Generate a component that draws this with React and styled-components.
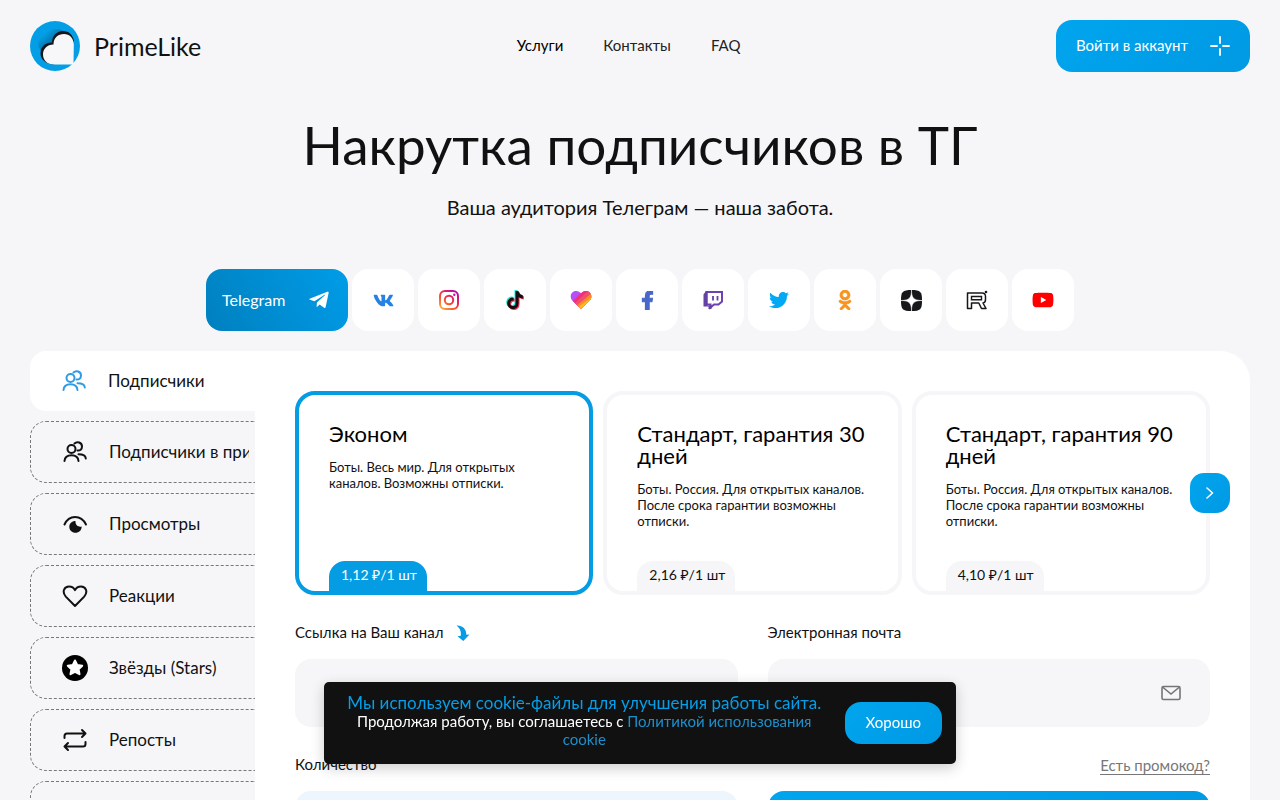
import styled, { createGlobalStyle, css } from "styled-components";
import {
  FaFacebookF,
  FaInstagram,
  FaOdnoklassniki,
  FaTelegramPlane,
  FaTiktok,
  FaTwitter,
  FaVk,
  FaYoutube,
} from "react-icons/fa";

const networks = [
  { name: "VK", icon: <FaVk size={21} color="#2681e4" /> },
  { name: "Instagram", icon: <InstagramIcon /> },
  { name: "TikTok", icon: <TiktokIcon /> },
  { name: "Likee", icon: <LikeeIcon /> },
  {
    name: "Facebook",
    icon: <FaFacebookF size={19} color="#4867c8" stroke="#4867c8" strokeWidth={30} />,
  },
  { name: "Twitch", icon: <TwitchIcon /> },
  { name: "Twitter", icon: <FaTwitter size={20} color="#03a9f4" /> },
  {
    name: "Одноклассники",
    icon: <FaOdnoklassniki size={20} color="#f7931e" stroke="#f7931e" strokeWidth={16} />,
  },
  { name: "Дзен", icon: <DzenIcon /> },
  { name: "Rutube", icon: <RutubeIcon /> },
  { name: "YouTube", icon: <FaYoutube size={22} color="#fe0000" /> },
];

const services = [
  { name: "Подписчики", icon: <UsersIcon />, active: true },
  { name: "Подписчики в приватный канал", icon: <UsersIcon /> },
  { name: "Просмотры", icon: <EyeIcon /> },
  { name: "Реакции", icon: <HeartIcon /> },
  { name: "Звёзды (Stars)", icon: <StarIcon /> },
  { name: "Репосты", icon: <RepeatIcon /> },
];

const tariffs = [
  {
    title: "Эконом",
    text: "Боты. Весь мир. Для открытых каналов. Возможны отписки.",
    price: "1,12 ₽/1 шт",
    active: true,
  },
  {
    title: "Стандарт, гарантия 30 дней",
    text: "Боты. Россия. Для открытых каналов. После срока гарантии возможны отписки.",
    price: "2,16 ₽/1 шт",
  },
  {
    title: "Стандарт, гарантия 90 дней",
    text: "Боты. Россия. Для открытых каналов. После срока гарантии возможны отписки.",
    price: "4,10 ₽/1 шт",
  },
];

export default function App() {
  return (
    <>
      <GlobalStyle />
      <Page>
        <Header>
          <Logo href="#">
            <LogoIcon />
            <span>PrimeLike</span>
          </Logo>
          <Nav>
            <NavLink href="#" $active>
              Услуги
            </NavLink>
            <NavLink href="#">Контакты</NavLink>
            <NavLink href="#">FAQ</NavLink>
          </Nav>
          <LoginButton>
            <span>Войти в аккаунт</span>
            <PlusIcon />
          </LoginButton>
        </Header>

        <Title>Накрутка подписчиков в ТГ</Title>
        <Subtitle>Ваша аудитория Телеграм — наша забота.</Subtitle>

        <Networks>
          <NetworkButton $active>
            <span>Telegram</span>
            <FaTelegramPlane size={22} />
          </NetworkButton>
          {networks.map((item) => (
            <NetworkButton key={item.name} aria-label={item.name}>
              {item.icon}
            </NetworkButton>
          ))}
        </Networks>

        <Main>
          <Sidebar>
            {services.map((item) => (
              <ServiceButton key={item.name} $active={item.active}>
                {item.icon}
                <span>{item.name}</span>
              </ServiceButton>
            ))}
            <ServiceButton aria-label="Ещё" />
          </Sidebar>

          <Panel>
            <Slider>
              {tariffs.map((item) => (
                <TariffCard key={item.title} $active={item.active}>
                  <h2>{item.title}</h2>
                  <p>{item.text}</p>
                  <Price $active={item.active}>{item.price}</Price>
                </TariffCard>
              ))}
              <NextButton aria-label="Вперёд">
                <svg width="8" height="12" viewBox="0 0 8 12" fill="none">
                  <path
                    d="M1 1l5.5 5L1 11"
                    stroke="#fff"
                    strokeWidth="1.6"
                    strokeLinecap="round"
                    strokeLinejoin="round"
                  />
                </svg>
              </NextButton>
            </Slider>

            <Form onSubmit={(e) => e.preventDefault()}>
              <Field>
                <LabelRow>
                  <label htmlFor="link">Ссылка на Ваш канал</label>
                  <ArrowIcon />
                </LabelRow>
                <InputBox>
                  <input id="link" type="text" />
                </InputBox>
              </Field>
              <Field>
                <LabelRow>
                  <label htmlFor="email">Электронная почта</label>
                </LabelRow>
                <InputBox>
                  <input id="email" type="email" />
                  <MailIcon />
                </InputBox>
              </Field>
              <Field>
                <LabelRow>
                  <label htmlFor="count">Количество</label>
                </LabelRow>
                <InputBox $tinted>
                  <input id="count" type="number" />
                </InputBox>
              </Field>
              <Field>
                <LabelRow $end>
                  <PromoLink href="#">Есть промокод?</PromoLink>
                </LabelRow>
                <SubmitButton type="submit" aria-label="Оформить заказ" />
              </Field>
            </Form>
          </Panel>
        </Main>
      </Page>

      <CookieBar>
        <CookieText>
          <strong>Мы используем cookie-файлы для улучшения работы сайта.</strong>
          <p>
            Продолжая работу, вы соглашаетесь с{" "}
            <a href="#">Политикой использования cookie</a>
          </p>
        </CookieText>
        <CookieButton>Хорошо</CookieButton>
      </CookieBar>
    </>
  );
}

function LogoIcon() {
  return (
    <svg width="50" height="50" viewBox="0 0 50 50">
      <defs>
        <linearGradient id="logoShade" x1="0.1" y1="0.1" x2="0.8" y2="0.8">
          <stop offset="0.2" stopColor="#049ee6" />
          <stop offset="1" stopColor="#04587f" />
        </linearGradient>
      </defs>
      <circle cx="25" cy="25" r="25" fill="#049ee6" />
      <path
        d="M11 15C18 8 27 6 33 10L23 24L11 30C7 25 7 19 11 15z"
        fill="url(#logoShade)"
      />
      <path
        d="M24 43.5C16 43 10.500 38.500 10.500 32.500C10.500 26 15 21.500 22 21.500C22 15 26.500 10 33 10C39 10 43 14 44 20L40 34z"
        fill="#14161a"
      />
      <path
        d="M43.500 43.500H24C17.500 43.500 13 39.500 13 33.500C13 28 17 23.500 23.500 23.500C23.500 17 28 13 34 13C39.500 13 43.500 17 43.800 23z"
        fill="#f7f7fa"
      />
    </svg>
  );
}

function PlusIcon() {
  return (
    <svg width="20" height="20" viewBox="0 0 20 20">
      <path
        d="M10 1v6M10 13v6M1 10h6M13 10h6"
        stroke="#fff"
        strokeWidth="1.8"
        strokeLinecap="round"
      />
    </svg>
  );
}

function InstagramIcon() {
  return (
    <svg width="22" height="22" viewBox="0 0 22 22" fill="none">
      <defs>
        <linearGradient
          id="insta"
          gradientUnits="userSpaceOnUse"
          x1="3"
          y1="21"
          x2="19"
          y2="1"
        >
          <stop offset="0" stopColor="#fdb52f" />
          <stop offset="0.5" stopColor="#f5333c" />
          <stop offset="1" stopColor="#b400b4" />
        </linearGradient>
      </defs>
      <rect x="2" y="2" width="18" height="18" rx="5" stroke="url(#insta)" strokeWidth="2" />
      <circle cx="11" cy="11" r="4.200" stroke="url(#insta)" strokeWidth="2" />
      <circle cx="16.300" cy="5.700" r="1.200" fill="#c8109a" />
    </svg>
  );
}

function TiktokIcon() {
  return (
    <svg width="20" height="20" viewBox="0 0 20 20">
      <FaTiktok size={18} x="0" y="0" color="#25e5df" />
      <FaTiktok size={18} x="2" y="2" color="#fe2c55" />
      <FaTiktok size={18} x="1" y="1" color="#111" />
    </svg>
  );
}

function LikeeIcon() {
  return (
    <svg width="22" height="20" viewBox="0 0 22 20">
      <clipPath id="likee">
        <path d="M11 19L2.500 10.800C-1 7 1 1 6 1C8.500 1 10 2.200 11 3.500C12 2.200 13.500 1 16 1C21 1 23 7 19.500 10.800z" />
      </clipPath>
      <g clipPath="url(#likee)">
        <rect width="22" height="20" fill="#b64df5" />
        <path d="M1 13L14 0H22V20H0z" fill="#f0307d" />
        <path d="M3 15L19 0H22V20H2z" fill="#f2506a" />
        <path d="M5 17L22 3V20H4z" fill="#fb8a2c" />
        <path d="M7 18L22 7V20H6z" fill="#fdbc1f" />
      </g>
    </svg>
  );
}

function TwitchIcon() {
  return (
    <svg width="21" height="20" viewBox="0 0 21 20" fill="none">
      <path
        d="M3.500 2H19V11.500L15.500 14.500H11L7.500 17.500V14.500H3.500z"
        stroke="#6f42b3"
        strokeWidth="2"
      />
      <path d="M0.500 4.500L3 1H4.500V15.500H8.500V19H5.500V16.500H0.500z" fill="#6441a5" />
      <path d="M10 6v4.500M14.500 6v4.500" stroke="#6441a5" strokeWidth="1.8" />
    </svg>
  );
}

function DzenIcon() {
  return (
    <svg width="21" height="21" viewBox="0 0 21 21">
      <path
        d="M10.500 0C1.500 0 0 1.500 0 10.500S1.500 21 10.500 21S21 19.500 21 10.500S19.500 0 10.500 0z"
        fill="#16171a"
      />
      <path
        d="M10.500 0C10.600 8 12.500 10.300 21 10.500C12.500 10.700 10.600 13 10.500 21C10.400 13 8.500 10.700 0 10.500C8.500 10.300 10.400 8 10.500 0z"
        fill="#fff"
        stroke="#fff"
        strokeWidth="0.500"
      />
    </svg>
  );
}

function RutubeIcon() {
  return (
    <svg width="22" height="20" viewBox="0 0 22 20" fill="none">
      <path
        d="M1.500 18.500V3H16C18.500 3 19.500 4.200 19.500 6.500V9.500C19.500 11.600 18.800 12.800 17 13L20 18.500H15.500L12.800 13H5.500V18.500z"
        stroke="#16171a"
        strokeWidth="1.5"
        strokeLinejoin="round"
      />
      <path d="M5.500 6.500H15.500V9.700H5.500z" stroke="#16171a" strokeWidth="1.4" />
      <circle cx="20" cy="2" r="1.300" fill="#16171a" />
    </svg>
  );
}

function UsersIcon() {
  return (
    <ServiceIcon viewBox="0 0 26 26">
      <circle cx="9.500" cy="10" r="4" />
      <path d="M2.500 22C2.800 18 5.200 16.300 9.500 16.300S16.200 18 16.500 22" />
      <path d="M12.500 4.500C15 2 20 3.500 20 7.500C20 10.500 18 11.800 15.500 11.600" />
      <path d="M16.500 15.300C21 15.300 23.500 16.500 23.800 19.500" />
    </ServiceIcon>
  );
}

function EyeIcon() {
  return (
    <ServiceIcon viewBox="0 0 26 26">
      <path d="M2.500 13.500C7 3.500 19 3.500 24 13.500" />
      <path
        d="M13.500 10C9.800 10 7.300 12.500 7.300 15.800C7.300 19.300 10 21.800 13.500 21.800S19.700 19.300 19.700 15.500C16.800 16.300 13.200 14.500 13.500 10z"
        fill="currentColor"
        stroke="none"
      />
    </ServiceIcon>
  );
}

function HeartIcon() {
  return (
    <ServiceIcon viewBox="0 0 26 26">
      <path d="M13 23L3.800 13.600C-0.500 8.500 2.500 3.500 7 3.500C10 3.500 12 5 13 7.200C14 5 16 3.500 19 3.500C23.500 3.500 26.500 8.500 22.200 13.600z" />
    </ServiceIcon>
  );
}

function StarIcon() {
  return (
    <ServiceIcon viewBox="0 0 26 26">
      <circle cx="13" cy="13" r="13" fill="#000" stroke="none" />
      <path
        d="M13 5.500L15.200 10L20.200 10.700L16.600 14.200L17.500 19.200L13 16.800L8.500 19.200L9.400 14.200L5.800 10.700L10.800 10z"
        fill="#fff"
        stroke="#fff"
      />
    </ServiceIcon>
  );
}

function RepeatIcon() {
  return (
    <ServiceIcon viewBox="0 0 26 26">
      <path d="M2.500 11V9C2.500 7.500 3.500 6.500 5 6.500H23.500M20 3L23.500 6.500L20 10" />
      <path d="M23.500 15V17C23.500 18.500 22.500 19.500 21 19.500H2.500M6 16L2.500 19.500L6 23" />
    </ServiceIcon>
  );
}

function ArrowIcon() {
  return (
    <svg width="14" height="16" viewBox="0 0 14 16">
      <path
        d="M0.500 0.500C6.500 0.200 10.500 4 10.300 9.800L13.500 9.500L7.300 16L1.500 11.300L4.800 10.800C5.500 7 4 3 0.500 0.500z"
        fill="#049de5"
      />
    </svg>
  );
}

function MailIcon() {
  return (
    <svg width="22" height="16" viewBox="0 0 22 16" fill="none">
      <rect
        x="2"
        y="1.500"
        width="18"
        height="13"
        rx="1.500"
        stroke="#757578"
        strokeWidth="1.6"
      />
      <path d="M2.500 2L11 9L19.500 2" stroke="#757578" strokeWidth="1.6" />
    </svg>
  );
}

const GlobalStyle = createGlobalStyle`
  * {
    box-sizing: border-box;
  }

  body {
    margin: 0;
    background: #f6f6f9;
    color: #111;
    font-family: "Lato", "Noto Sans", sans-serif;
    font-size: 15px;
  }

  button, input {
    font: inherit;
    color: inherit;
    border: 0;
  }

  button {
    cursor: pointer;
  }

  button span {
    padding-bottom: 2px;
  }

  a {
    color: inherit;
    text-decoration: none;
  }

  svg {
    flex-shrink: 0;
  }
`;

const Page = styled.div`
  padding: 20px 30px 0;
`;

const Header = styled.header`
  display: flex;
  justify-content: space-between;
  align-items: center;
`;

const Logo = styled.a`
  display: flex;
  align-items: center;
  gap: 14px;
  font-size: 25px;
`;

const Nav = styled.nav`
  display: flex;
  gap: 40px;
  padding-bottom: 2px;
`;

const NavLink = styled.a`
  color: ${(props) => (props.$active ? "#000" : "#222")};
`;

const blueGradient = css`
  background: linear-gradient(135deg, #00a5ee, #0099e4);
  color: #fff;
`;

const LoginButton = styled.button`
  ${blueGradient}
  display: flex;
  align-items: center;
  gap: 22px;
  height: 52px;
  padding: 0 20px;
  border-radius: 16px;
`;

const Title = styled.h1`
  margin: 43px 0 0;
  text-align: center;
  font-size: 53px;
  line-height: 60px;
  font-weight: 400;
`;

const Subtitle = styled.p`
  margin: 20px 0 0;
  text-align: center;
  font-size: 20px;
  line-height: 24px;
`;

const Networks = styled.div`
  display: flex;
  justify-content: center;
  gap: 4px;
  margin-top: 50px;
`;

const NetworkButton = styled.button`
  display: flex;
  align-items: center;
  justify-content: center;
  width: 62px;
  height: 62px;
  padding: 0;
  border-radius: 16px;
  background: #fff;

  ${(props) =>
    props.$active &&
    css`
      width: 142px;
      padding: 0 18px 0 16px;
      justify-content: space-between;
      font-size: 16px;
      background: linear-gradient(60deg, #0080bf, #009ce8);
      color: #fff;
    `}
`;

const Main = styled.main`
  display: flex;
  margin-top: 20px;
`;

const Sidebar = styled.aside`
  width: 225px;
  flex-shrink: 0;
  display: flex;
  flex-direction: column;
  gap: 10px;
`;

const ServiceButton = styled.button`
  display: flex;
  align-items: center;
  gap: 21px;
  height: 62px;
  padding: 0 6px 0 31px;
  white-space: nowrap;
  font-size: 17px;
  border: 1px dashed #77777c;
  border-right: 0;
  border-radius: 16px 0 0 16px;
  background: transparent;

  span {
    overflow: hidden;
  }

  ${(props) =>
    props.$active &&
    css`
      height: 60px;
      border: 0;
      background: #fff;

      svg {
        color: #2f9be6;
      }
    `}
`;

const ServiceIcon = styled.svg`
  width: 26px;
  height: 26px;
  fill: none;
  stroke: currentColor;
  stroke-width: 2;
  stroke-linecap: round;
  stroke-linejoin: round;
`;

const Panel = styled.section`
  flex: 1;
  min-width: 0;
  padding: 40px;
  border-radius: 0 30px 0 0;
  background: #fff;
`;

const Slider = styled.div`
  position: relative;
  display: grid;
  grid-template-columns: repeat(3, 1fr);
  gap: 10px;
`;

const TariffCard = styled.article`
  display: flex;
  flex-direction: column;
  align-items: flex-start;
  min-height: 204px;
  padding: 28px 30px 0;
  border: 4px solid ${(props) => (props.$active ? "#049ce3" : "#f6f6f9")};
  border-radius: 20px;

  h2 {
    margin: 0;
    font-size: 22px;
    line-height: 22px;
    font-weight: 400;
    color: #000;
  }

  p {
    margin: 14px 0 0;
    font-size: 13px;
    line-height: 16px;
  }
`;

const Price = styled.div`
  margin-top: auto;
  height: 30px;
  padding: 0 10px 0 12px;
  font-size: 14px;
  line-height: 28px;
  border-radius: 16px 16px 0 0;
  background: ${(props) => (props.$active ? "#049ce3" : "#f6f6f9")};
  color: ${(props) => (props.$active ? "#fff" : "#111")};
`;

const NextButton = styled.button`
  ${blueGradient}
  position: absolute;
  top: 82px;
  right: -20px;
  display: flex;
  align-items: center;
  justify-content: center;
  width: 40px;
  height: 40px;
  padding: 0;
  border-radius: 14px;
`;

const Form = styled.form`
  display: grid;
  grid-template-columns: 1fr 1fr;
  gap: 28px 30px;
  margin-top: 28px;
`;

const Field = styled.div`
  display: flex;
  flex-direction: column;
  gap: 16px;
`;

const LabelRow = styled.div`
  display: flex;
  align-items: center;
  justify-content: ${(props) => (props.$end ? "flex-end" : "flex-start")};
  gap: 12px;
  height: 20px;

  label {
    padding-bottom: 2px;
  }
`;

const InputBox = styled.div`
  display: flex;
  align-items: center;
  height: 68px;
  padding: 0 28px;
  border-radius: 16px;
  background: ${(props) => (props.$tinted ? "#ecf6fc" : "#f6f6f9")};

  input {
    flex: 1;
    min-width: 0;
    height: 100%;
    padding: 0;
    background: transparent;
    outline: none;
  }
`;

const PromoLink = styled.a`
  color: #77777a;
  border-bottom: 1px solid #77777a;
`;

const SubmitButton = styled.button`
  ${blueGradient}
  height: 68px;
  border-radius: 16px;
`;

const CookieBar = styled.div`
  position: fixed;
  left: 50%;
  bottom: 36px;
  transform: translateX(-50%);
  display: flex;
  align-items: center;
  gap: 14px;
  width: 632px;
  max-width: 100%;
  padding: 12px 14px;
  border-radius: 5px;
  background: #111;
  box-shadow: 0 4px 14px rgba(0, 0, 0, 0.2);
  color: #fff;
`;

const CookieText = styled.div`
  flex: 1;
  padding-bottom: 4px;
  text-align: center;
  line-height: 18px;

  strong {
    display: block;
    font-size: 17px;
    font-weight: 400;
    color: #049fe8;
  }

  p {
    margin: 0;
  }

  a {
    color: #1d8fcb;
  }
`;

const CookieButton = styled.button`
  ${blueGradient}
  height: 42px;
  padding: 0 21px 2px;
  border-radius: 16px;
`;
